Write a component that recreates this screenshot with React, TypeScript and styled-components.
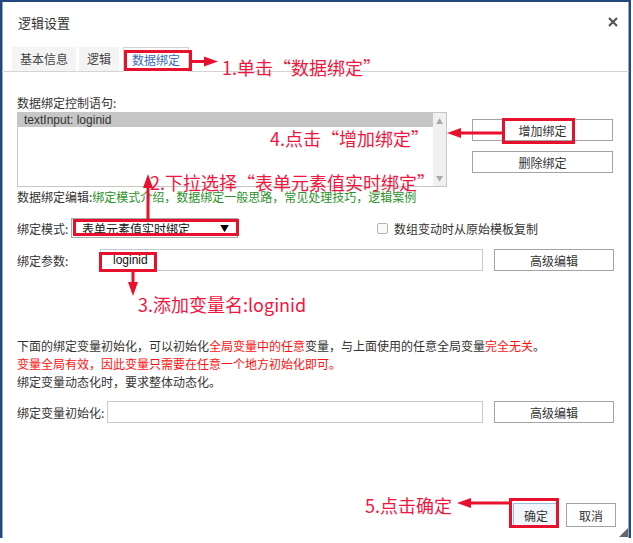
import * as React from 'react';
import styled, { createGlobalStyle } from 'styled-components';

const Colors = {
  TEXT: '#333',
  LINK: '#2a922a',
  WARN: '#ff1010',
  MARK: '#e8112d',
  NOTE: '#f2163f',
  BORDER: '#d4d4d4',
};

const GlobalStyle = createGlobalStyle`
  html, body {
    margin: 0;
    padding: 0;
    background: #fff;
  }
  body {
    font-family: "Liberation Sans", "Noto Sans CJK SC", sans-serif;
    font-size: 12px;
    color: ${Colors.TEXT};
  }
`;

const Page = styled.div`
  position: relative;
  width: 633px;
  height: 543px;
  overflow: hidden;
`;

const Dialog = styled.div`
  position: relative;
  box-sizing: border-box;
  width: 631px;
  height: 538px;
  border: 2px solid #24477c;
  border-bottom: none;
  box-shadow: inset 1px 0 0 #8fa9d0, inset -1px 0 0 #8fa9d0;
  display: flex;
  flex-direction: column;
`;

const Header = styled.div`
  height: 40px;
  display: flex;
  align-items: center;
  justify-content: space-between;
  padding: 0 11px 0 16px;
  font-size: 13px;
  font-family: "Noto Sans CJK SC", sans-serif;
`;

const TabBar = styled.div`
  display: flex;
  align-items: flex-end;
  height: 24px;
  margin-top: 5px;
  padding-left: 10px;
  border-bottom: 1px solid ${Colors.BORDER};
`;

const Tab = styled.div<{ $active?: boolean }>`
  box-sizing: border-box;
  height: ${p => (p.$active ? '25px' : '24px')};
  line-height: 23px;
  padding: 0 8px;
  margin-right: 3px;
  margin-bottom: ${p => (p.$active ? '-1px' : '0')};
  margin-left: ${p => (p.$active ? '1px' : '0')};
  background: ${p => (p.$active ? '#fff' : '#f4f4f4')};
  color: ${p => (p.$active ? '#3c6cb4' : '#444')};
  border: ${p => (p.$active ? `1px solid ${Colors.BORDER}` : 'none')};
  border-bottom: none;
  font-family: "Noto Sans CJK SC", sans-serif;
`;

const Body = styled.div`
  flex: 1;
  padding: 22px 15px 0;
  font-family: "Noto Sans CJK SC", sans-serif;
`;

const Line = styled.div<{ $gap?: number }>`
  line-height: 18px;
  margin-top: ${p => p.$gap || 0}px;
  white-space: nowrap;
`;

const BindingRow = styled.div`
  display: flex;
  align-items: flex-start;
  height: 75px;
`;

const ListBox = styled.div`
  box-sizing: border-box;
  width: 430px;
  height: 75px;
  border: 1px solid #c6c6c6;
  display: flex;
`;

const ListItems = styled.div`
  flex: 1;
`;

const ListItem = styled.div<{ $selected?: boolean }>`
  height: 14px;
  line-height: 14px;
  padding-left: 6px;
  background: ${p => (p.$selected ? '#c6c6c6' : 'transparent')};
  font-family: "Liberation Sans", sans-serif;
  font-size: 12px;
`;

const ScrollTrack = styled.div`
  width: 13px;
  background: #f0f0f0;
  display: flex;
  flex-direction: column;
  justify-content: space-between;
  align-items: center;
  padding: 4px 0;
  color: #a8a8a8;
  font-size: 7px;
  line-height: 8px;
`;

const ButtonColumn = styled.div`
  display: flex;
  flex-direction: column;
  gap: 10px;
  margin-left: 25px;
  padding-top: 7px;
`;

const Button = styled.button<{ $width: number; $height?: number; $primary?: boolean }>`
  box-sizing: border-box;
  width: ${p => p.$width}px;
  height: ${p => p.$height || 22}px;
  padding: 0;
  border: 1px solid ${p => (p.$primary ? '#9cbde4' : '#a3a3a3')};
  background: ${p => (p.$primary ? '#f1f6fc' : '#fff')};
  color: ${Colors.TEXT};
  font-family: "Noto Sans CJK SC", sans-serif;
  font-size: 12px;
  flex-shrink: 0;
`;

const FieldRow = styled.div<{ $gap: number; $height: number }>`
  display: flex;
  align-items: center;
  height: ${p => p.$height}px;
  margin-top: ${p => p.$gap}px;
`;

const FieldLabel = styled.div<{ $width: number }>`
  width: ${p => p.$width}px;
  flex-shrink: 0;
  white-space: nowrap;
`;

const Select = styled.div`
  box-sizing: border-box;
  width: 167px;
  height: 20px;
  border: 1px solid #a9a9a9;
  display: flex;
  align-items: center;
  justify-content: space-between;
  padding: 0 8px 0 10px;
  color: #111;
`;

const Caret = styled.span`
  font-size: 9px;
  color: #000;
`;

const CheckWrap = styled.label`
  display: flex;
  align-items: center;
  margin-left: 139px;
`;

const CheckBox = styled.span`
  box-sizing: border-box;
  width: 11px;
  height: 11px;
  border: 1px solid #b4b4b4;
  border-radius: 2px;
  background: #fafafa;
  margin-right: 6px;
`;

const TextInput = styled.div<{ $width: number }>`
  box-sizing: border-box;
  width: ${p => p.$width}px;
  height: 22px;
  border: 1px solid #c4cad3;
  padding-left: 12px;
  line-height: 20px;
  font-family: "Liberation Sans", sans-serif;
  color: #111;
  margin-right: 11px;
`;

const Link = styled.span`
  color: ${Colors.LINK};
`;

const Warn = styled.span`
  color: ${Colors.WARN};
`;

const Footer = styled.div`
  display: flex;
  justify-content: flex-end;
  gap: 7px;
  padding: 0 13px 11px 0;
`;

const Grip = styled.div`
  position: absolute;
  right: 1px;
  bottom: 1px;
  width: 0;
  height: 0;
  border-left: 9px solid transparent;
  border-bottom: 9px solid #666;
`;

const Overlay = styled.svg`
  position: absolute;
  left: 0;
  top: 0;
  pointer-events: none;
`;

const Note = styled.div<{ $x: number; $y: number }>`
  position: absolute;
  left: ${p => p.$x}px;
  top: ${p => p.$y}px;
  line-height: 20px;
  font-size: 18px;
  font-family: "Noto Sans CJK SC", sans-serif;
  color: ${Colors.NOTE};
  white-space: nowrap;
  pointer-events: none;
`;

const CloseIcon = () => (
  <svg width="10" height="10" viewBox="0 0 10 10">
    <path d="M1 1 L9 9 M9 1 L1 9" stroke="#555" strokeWidth="2.2" />
  </svg>
);

// arrow: shaft from (x1,y1) to the tip at (x2,y2)
const Arrow = ({ x1, y1, x2, y2 }: { x1: number; y1: number; x2: number; y2: number }) => {
  const dx = x2 - x1;
  const dy = y2 - y1;
  const len = Math.sqrt(dx * dx + dy * dy);
  const ux = dx / len;
  const uy = dy / len;
  const head = 14;
  const half = 5;
  const bx = x2 - ux * head;
  const by = y2 - uy * head;
  const pts = `${x2},${y2} ${bx - uy * half},${by + ux * half} ${bx + uy * half},${by - ux * half}`;
  return (
    <g>
      <line x1={x1} y1={y1} x2={bx + ux * 2} y2={by + uy * 2} stroke={Colors.MARK} strokeWidth="3" />
      <polygon points={pts} fill={Colors.MARK} />
    </g>
  );
};

const Mark = ({ x, y, w, h }: { x: number; y: number; w: number; h: number }) => (
  <rect x={x} y={y} width={w} height={h} fill="none" stroke={Colors.MARK} strokeWidth="3" />
);

const Annotations = () => (
  <>
    <Overlay width="633" height="543">
      <Mark x={125.5} y={51.5} w={65} h={18} />
      <Arrow x1={192} y1={61.5} x2={218} y2={61.5} />
      <Mark x={503.5} y={119.5} w={70} h={23} />
      <Arrow x1={502} y1={133} x2={447} y2={133} />
      <Mark x={74.5} y={220.5} w={163} h={14} />
      <Arrow x1={148} y1={219} x2={148} y2={174} />
      <Mark x={100.5} y={253.5} w={55} h={17} />
      <Arrow x1={133} y1={272} x2={133} y2={296} />
      <Mark x={510.5} y={499.5} w={47} h={27} />
      <Arrow x1={510} y1={503} x2={457} y2={503} />
    </Overlay>
    <Note $x={222} $y={57}>1.单击“数据绑定”</Note>
    <Note $x={270} $y={128}>4.点击“增加绑定”</Note>
    <Note $x={150} $y={172}>2.下拉选择“表单元素值实时绑定”</Note>
    <Note $x={138} $y={294}>3.添加变量名:loginid</Note>
    <Note $x={365} $y={495}>5.点击确定</Note>
  </>
);

const App = () => {
  return (
    <Page>
      <GlobalStyle />
      <Dialog>
        <Header>
          <span>逻辑设置</span>
          <CloseIcon />
        </Header>
        <TabBar>
          <Tab>基本信息</Tab>
          <Tab>逻辑</Tab>
          <Tab $active>数据绑定</Tab>
        </TabBar>
        <Body>
          <Line>数据绑定控制语句:</Line>
          <BindingRow>
            <ListBox>
              <ListItems>
                <ListItem $selected>textInput: loginid</ListItem>
              </ListItems>
              <ScrollTrack>
                <span>▲</span>
                <span>▼</span>
              </ScrollTrack>
            </ListBox>
            <ButtonColumn>
              <Button $width={141}>增加绑定</Button>
              <Button $width={141}>删除绑定</Button>
            </ButtonColumn>
          </BindingRow>
          <Line $gap={1}>
            数据绑定编辑:<Link>绑定模式介绍，数据绑定一般思路，常见处理技巧，逻辑案例</Link>
          </Line>
          <FieldRow $gap={12} $height={20}>
            <FieldLabel $width={54}>绑定模式:</FieldLabel>
            <Select>
              <span>表单元素值实时绑定</span>
              <Caret>▼</Caret>
            </Select>
            <CheckWrap>
              <CheckBox />
              数组变动时从原始模板复制
            </CheckWrap>
          </FieldRow>
          <FieldRow $gap={11} $height={22}>
            <FieldLabel $width={83}>绑定参数:</FieldLabel>
            <TextInput $width={386}>loginid</TextInput>
            <Button $width={120}>高级编辑</Button>
          </FieldRow>
          <Line $gap={66}>
            下面的绑定变量初始化，可以初始化<Warn>全局变量中的任意</Warn>变量，与上面使用的任意全局变量<Warn>完全无关</Warn>。
          </Line>
          <Line>
            <Warn>变量全局有效，因此变量只需要在任意一个地方初始化即可。</Warn>
          </Line>
          <Line>绑定变量动态化时，要求整体动态化。</Line>
          <FieldRow $gap={10} $height={22}>
            <FieldLabel $width={90}>绑定变量初始化:</FieldLabel>
            <TextInput $width={379} />
            <Button $width={120}>高级编辑</Button>
          </FieldRow>
        </Body>
        <Footer>
          <Button $width={46} $height={24} $primary>确定</Button>
          <Button $width={50} $height={24}>取消</Button>
        </Footer>
        <Grip />
      </Dialog>
      <Annotations />
    </Page>
  );
};

export default App;
